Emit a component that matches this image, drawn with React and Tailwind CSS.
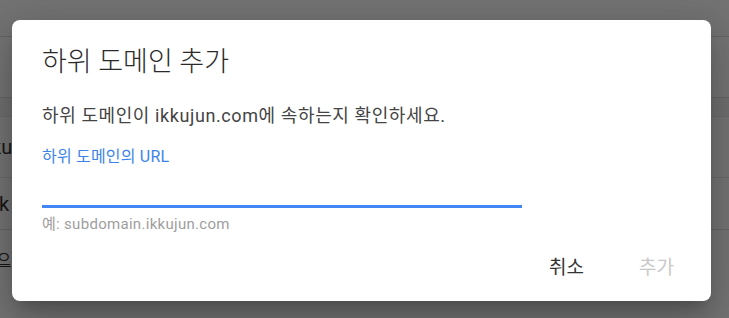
import { useState } from 'react';

const font = { fontFamily: 'Roboto, "Noto Sans CJK KR", sans-serif' };

function Backdrop() {
    return (
        <div className="w-[729px] h-[318px] bg-white overflow-hidden text-[#333]">
            <div className="h-[37px] bg-[#fafafa] border-b border-[#ddd]" />
            <div className="h-[61px] border-b border-[#e0e0e0]" />
            <div className="h-[19px] bg-[#f3f3f3] border-b border-[#e6e6e6]" />
            <div className="h-[61px] border-b border-[#e6e6e6] flex items-center -ml-[9px] text-[20px]">ku</div>
            <div className="h-[52px] border-b border-[#e0e0e0] flex items-center -ml-[1px] text-[20px]">k</div>
            <div className="h-[60px] flex items-center -ml-[3px] text-[15px] underline">으</div>
        </div>
    );
}

export default function App() {
    const [value, setValue] = useState('');

    return (
        <div className="relative w-[729px] h-[318px] overflow-hidden" style={font}>
            <Backdrop />
            <div className="absolute inset-0 bg-black/[0.54] pl-[12px] pt-[20px]">
                <div className="w-[699px] h-[281px] bg-white rounded-[8px] shadow-[0_11px_15px_-7px_rgba(0,0,0,0.2),0_24px_38px_3px_rgba(0,0,0,0.14),0_9px_46px_8px_rgba(0,0,0,0.12)] flex flex-col px-[30px]">
                    <h2 className="text-[27px] leading-[36px] text-[#2a2a2a] mt-[24px] font-light">하위 도메인 추가</h2>
                    <p className="text-[18px] leading-[26px] tracking-[0.6px] text-[#444] mt-[23px]">하위 도메인이 ikkujun.com에 속하는지 확인하세요.</p>
                    <label className="text-[16px] leading-[22px] tracking-[0.2px] text-[#3b84ea] mt-[17px]">하위 도메인의 URL</label>
                    <input
                        value={value}
                        onChange={(e) => setValue(e.target.value)}
                        className="w-[480px] h-[40px] border-b-[3px] border-[#4285f4] outline-none text-[18px] text-[#333] bg-transparent"
                    />
                    <div className="text-[15px] leading-[20px] tracking-[0.3px] text-[#9e9e9e] mt-[6px]">예: subdomain.ikkujun.com</div>
                    <div className="flex justify-end items-center mt-[15px] -mr-[9px] gap-[23px]">
                        <button className="text-[19px] leading-[26px] text-[#333] px-[16px] py-[6px]">취소</button>
                        <button className="text-[19px] leading-[26px] text-[#c8c8c8] px-[16px] py-[6px]" disabled>추가</button>
                    </div>
                </div>
            </div>
        </div>
    );
}
